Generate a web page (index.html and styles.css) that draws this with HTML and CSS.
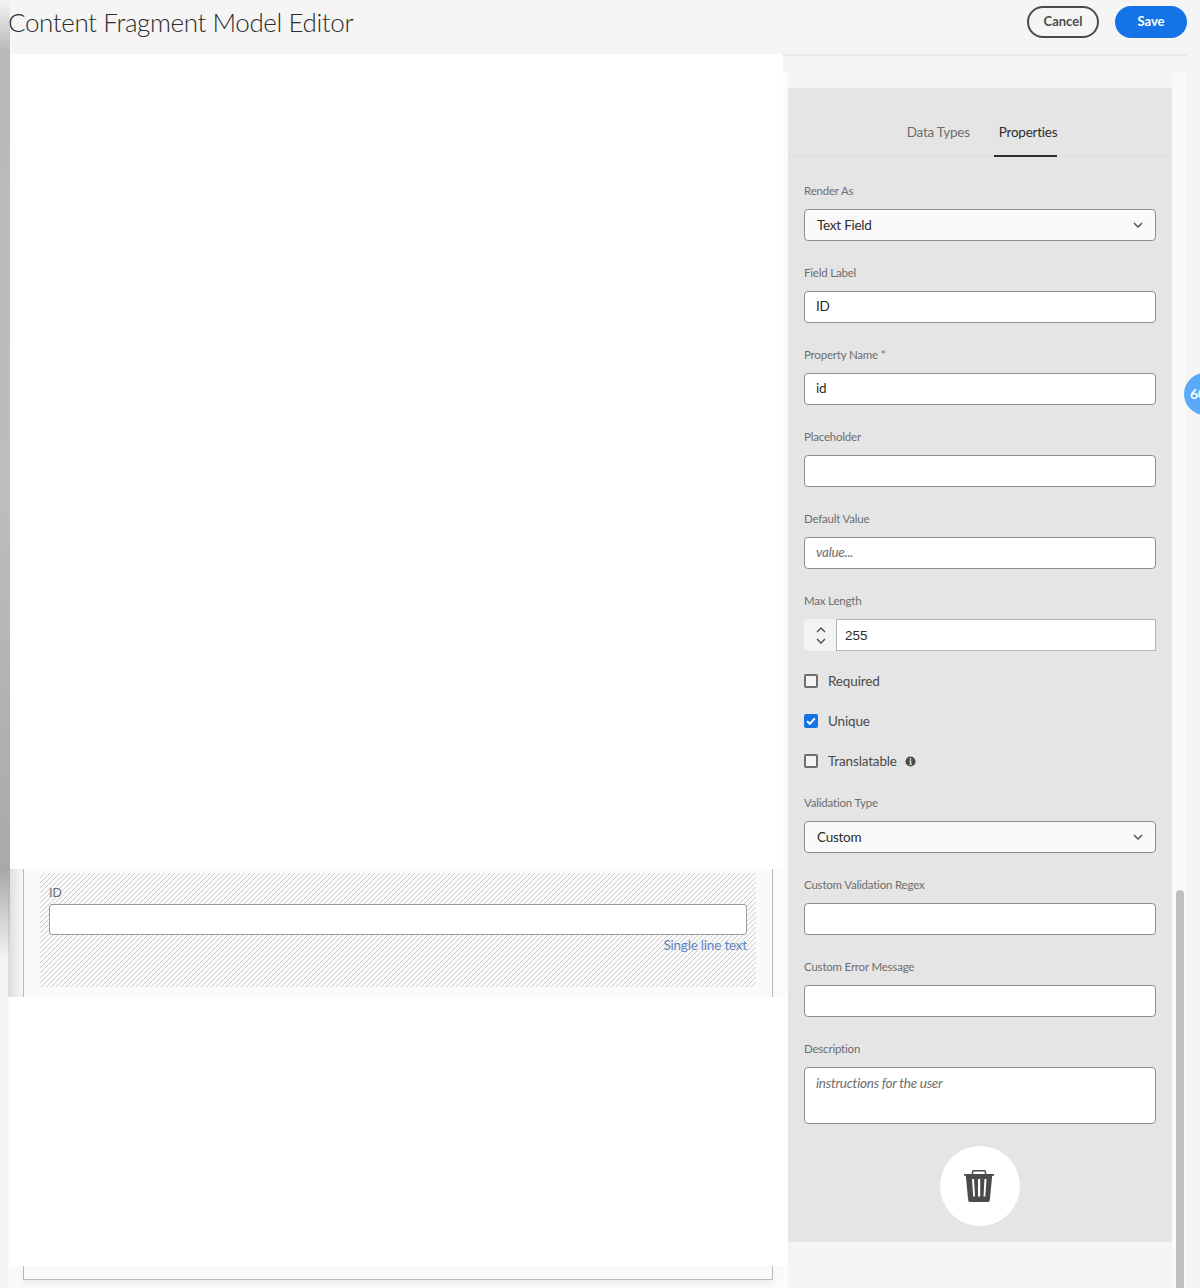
FILE: index.html
```html
<!DOCTYPE html>
<html lang="en">
<head>
<meta charset="utf-8">
<title>Content Fragment Model Editor</title>
<link rel="stylesheet" href="styles.css">
</head>
<body>
<div class="edge-shadow"></div>
<header class="topbar">
  <h1 class="title">Content Fragment Model Editor</h1>
  <div class="actions">
    <button class="btn btn-cancel">Cancel</button>
    <button class="btn btn-save">Save</button>
  </div>
</header>
<main class="workspace">
  <section class="canvas">
    <div class="mask mask-top"></div>
    <div class="card-row">
      <div class="card">
        <div class="hatch">
          <div class="field-preview-label">ID</div>
          <div class="field-preview-input"></div>
          <div class="field-preview-type">Single line text</div>
        </div>
      </div>
    </div>
    <div class="mask mask-bottom"></div>
    <div class="card-end"></div>
  </section>
  <aside class="side">
    <div class="panel">
      <nav class="tabs">
        <span class="tab">Data Types</span>
        <span class="tab tab-active">Properties</span>
      </nav>
      <form class="props">
        <div class="field">
          <div class="label">Render As</div>
          <div class="control select"><span>Text Field</span>
            <svg class="chev" viewBox="0 0 10 6"><path d="M1 1l4 4 4-4"/></svg></div>
        </div>
        <div class="field">
          <div class="label">Field Label</div>
          <div class="control">ID</div>
        </div>
        <div class="field">
          <div class="label">Property Name *</div>
          <div class="control">id</div>
        </div>
        <div class="field">
          <div class="label">Placeholder</div>
          <div class="control"></div>
        </div>
        <div class="field">
          <div class="label">Default Value</div>
          <div class="control hint">value...</div>
        </div>
        <div class="field field-num">
          <div class="label">Max Length</div>
          <div class="number">
            <div class="stepper">
              <svg class="step" viewBox="0 0 10 6"><path d="M1 5l4-4 4 4"/></svg>
              <svg class="step" viewBox="0 0 10 6"><path d="M1 1l4 4 4-4"/></svg>
            </div>
            <div class="number-value">255</div>
          </div>
        </div>
        <div class="checks">
          <div class="check"><span class="box"></span>Required</div>
          <div class="check"><span class="box box-on"><svg viewBox="0 0 14 14"><path d="M3.2 7.2l2.6 2.700 5-5.600"/></svg></span>Unique</div>
          <div class="check"><span class="box"></span>Translatable
            <svg class="info" viewBox="0 0 12 12"><circle cx="6" cy="6" r="5.500"/><rect class="info-mark" x="5.100" y="2.200" width="1.800" height="1.800" rx=".5"/><path class="info-mark" d="M4.600 5h2.300v3.600h.7v1H4.500v-1h.9V6h-.8z"/></svg>
          </div>
        </div>
        <div class="field">
          <div class="label">Validation Type</div>
          <div class="control select"><span>Custom</span>
            <svg class="chev" viewBox="0 0 10 6"><path d="M1 1l4 4 4-4"/></svg></div>
        </div>
        <div class="field">
          <div class="label">Custom Validation Regex</div>
          <div class="control"></div>
        </div>
        <div class="field">
          <div class="label">Custom Error Message</div>
          <div class="control"></div>
        </div>
        <div class="field">
          <div class="label">Description</div>
          <div class="control area hint">instructions for the user</div>
        </div>
        <div class="trash-row">
          <button type="button" class="trash" aria-label="Delete">
            <svg viewBox="0 0 30 32"><path class="trash-handle" d="M8.500 4.500V2c0-.8.500-1.300 1.300-1.300h10.400c.8 0 1.300.5 1.300 1.300v2.500"/><path d="M0 4h30v1.800h-1.800l-2.400 24.500c-.1 1-.8 1.700-1.800 1.700H6c-1 0-1.700-.7-1.800-1.700L1.800 5.800H0z"/><path class="trash-slit" d="M8 9h2l1 17.500H9.200zM14 9h2.200v17.500H14zM20.500 9h2l-1.200 17.500h-1.800z"/></svg>
          </button>
        </div>
      </form>
    </div>
    <div class="track"><div class="thumb"></div></div>
  </aside>
</main>
<div class="badge">60</div>
</body>
</html>
```
FILE: styles.css
```css
* { box-sizing: border-box; }
html, body { margin: 0; height: 1288px; overflow: hidden; }
body {
  position: relative;
  background: #f5f5f5;
  font-family: Lato, "Noto Sans", sans-serif;
  color: #4b4b4b;
}
.edge-shadow {
  position: absolute;
  left: 0;
  top: 0;
  width: 10px;
  height: 960px;
  background: linear-gradient(to bottom, rgba(160,160,160,0) 0, rgba(170,170,170,.8) 50px, #bdbdbd 500px, #a9a9a9 870px, rgba(200,200,200,0) 960px);
}
.topbar {
  height: 54px;
  padding: 5px 13px 0 8px;
  display: flex;
  justify-content: space-between;
  align-items: flex-start;
}
.title {
  margin: 0;
  font-weight: 300;
  font-size: 26px;
  letter-spacing: -0.4px;
  line-height: 34px;
  color: #2c2c2c;
}
.actions { display: flex; gap: 16px; margin-top: 1px; }
.btn {
  width: 72px;
  height: 32px;
  border-radius: 16px;
  font-family: inherit;
  font-size: 13px;
  font-weight: 700;
  padding: 0 0 2px;
}
.btn-cancel { background: transparent; border: 2px solid #4b4b4b; color: #4b4b4b; }
.btn-save { background: #1473e6; border: 2px solid #1473e6; color: #fff; }
.workspace {
  display: flex;
  height: 1234px;
  background: linear-gradient(#e9e9e9, #e9e9e9) no-repeat 783px 0 / 404px 2px;
}
.canvas {
  margin-left: 8px;
  width: 775px;
  background: #fafafa;
  flex: none;
}
.mask { background: #fff; position: relative; }
.mask-top { height: 815px; margin-left: 2px; }
.mask-bottom { height: 269px; margin-left: 1px; margin-right: -4px; }
.card-row {
  height: 128px;
  padding: 0 10px 0 15px;
  background: linear-gradient(to right, #dcdcdc, #f8f8f8 15px, #fafafa);
}
.card {
  height: 128px;
  background: #fafafa;
  border-left: 1px solid #b9b9b9;
  border-right: 1px solid #b9b9b9;
  padding: 4px 16px 0;
}
.hatch {
  height: 114px;
  padding: 12px 9px 0;
  background-image: url("data:image/svg+xml,%3Csvg xmlns='http://www.w3.org/2000/svg' width='5' height='5'%3E%3Cpath d='M-1 1L1 -1M0 5L5 0M4 6L6 4' stroke='%23c2c2c2' stroke-width='.8'/%3E%3C/svg%3E");
  background-size: 5px 5px;
}
.field-preview-label {
  font-family: "Liberation Sans", sans-serif;
  font-size: 13px;
  line-height: 16px;
  color: #6e6e6e;
  margin-bottom: 3px;
}
.field-preview-input {
  height: 31px;
  background: #fff;
  border: 1px solid #9a9a9a;
  border-radius: 3px;
}
.field-preview-type {
  text-align: right;
  font-size: 13.5px;
  letter-spacing: -0.2px;
  line-height: 20px;
  color: #5f86c4;
}
.card-end {
  height: 14px;
  margin: 0 10px 0 15px;
  background: #fafafa;
  border: 1px solid #b9b9b9;
  border-top: 0;
  box-shadow: 0 3px 6px rgba(0,0,0,.06);
}
.side {
  flex: none;
  width: 402px;
  margin-top: 18px;
  border-left: 5px solid #fbfbfb;
  display: flex;
  align-items: flex-start;
}
.panel {
  width: 384px;
  height: 1154px;
  margin-top: 16px;
  background: #e5e5e5;
  flex: none;
}
.tabs {
  height: 69px;
  border-bottom: 2px solid #e1e1e1;
  display: flex;
  justify-content: center;
  gap: 29px;
  padding-left: 4px;
}
.tab {
  height: 69px;
  padding-top: 35px;
  font-size: 13.5px;
  letter-spacing: -0.25px;
  line-height: 18px;
  color: #6e6e6e;
  border-bottom: 2px solid transparent;
}
.tab-active {
  color: #2c2c2c;
  border-bottom-color: #2c2c2c;
  padding-left: 5px;
  margin-left: -5px;
}
.props { padding: 25px 16px 0; }
.field { margin-bottom: 23px; }
.field-num { margin-bottom: 10px; }
.label {
  font-size: 11.5px;
  letter-spacing: -0.2px;
  line-height: 18px;
  margin-bottom: 9px;
  color: #6e6e6e;
}
.control {
  height: 32px;
  background: #fff;
  border: 1px solid #8e8e8e;
  border-radius: 4px;
  padding: 0 11px;
  font-size: 13.5px;
  letter-spacing: -0.25px;
  line-height: 28px;
  color: #2c2c2c;
}
.select {
  background: #fafafa;
  display: flex;
  justify-content: space-between;
  align-items: center;
  padding: 0 12px;
}
.chev { width: 10px; height: 6px; }
.chev path, .step path { fill: none; stroke: #555; stroke-width: 1.5; }
.hint { font-style: italic; color: #6e6e6e; }
.area { height: 57px; line-height: 30px; }
.number { display: flex; height: 32px; }
.stepper {
  width: 32px;
  background: #f3f3f3;
  border-radius: 4px 0 0 4px;
  display: flex;
  flex-direction: column;
  align-items: center;
  justify-content: center;
  gap: 5px;
  padding-left: 1px;
}
.step { width: 10px; height: 6px; }
.number-value {
  flex: 1;
  background: #fff;
  border: 1px solid #b3b3b3;
  padding-left: 8px;
  font-family: "Liberation Sans", sans-serif;
  font-size: 13.5px;
  line-height: 31px;
  color: #2c2c2c;
}
.checks { margin-bottom: 13px; }
.check {
  height: 40px;
  display: flex;
  align-items: center;
  gap: 10px;
  padding-bottom: 1px;
  font-size: 13.5px;
  letter-spacing: -0.15px;
  color: #4b4b4b;
}
.box {
  width: 14px;
  height: 14px;
  margin-top: 1px;
  background: #f5f5f5;
  border: 2px solid #6e6e6e;
  border-radius: 2px;
  flex: none;
}
.box-on { background: #1473e6; border: 0; }
.box-on svg { display: block; width: 14px; height: 14px; }
.box-on path { fill: none; stroke: #fff; stroke-width: 2; }
.info { width: 11px; height: 11px; margin: 1px 0 0 -2px; }
.info circle { fill: #4b4b4b; }
.info-mark { fill: #e5e5e5; }
.trash-row { display: flex; justify-content: center; margin-top: -1px; }
.trash {
  width: 80px;
  height: 80px;
  border: 0;
  border-radius: 50%;
  background: #fff;
  padding: 0 2px 0 0;
  display: flex;
  align-items: center;
  justify-content: center;
}
.trash svg { width: 30px; height: 32px; }
.trash svg path { fill: #4b4b4b; }
.trash svg .trash-handle { fill: none; stroke: #4b4b4b; stroke-width: 1.5; }
.trash svg .trash-slit { fill: #fff; }
.track {
  flex: none;
  width: 13px;
  height: 1216px;
  background: #fafafa;
  display: flex;
  flex-direction: column;
  justify-content: flex-end;
  padding: 0 1px 0 4px;
}
.thumb {
  height: 398px;
  background: #c0c0c0;
  border-radius: 4px 4px 0 0;
}
.badge {
  position: absolute;
  left: 1184px;
  top: 373px;
  width: 42px;
  height: 42px;
  border-radius: 50%;
  background: #5aa9fa;
  color: #fff;
  font-size: 14px;
  font-weight: 700;
  line-height: 42px;
  padding-left: 6px;
}
```
